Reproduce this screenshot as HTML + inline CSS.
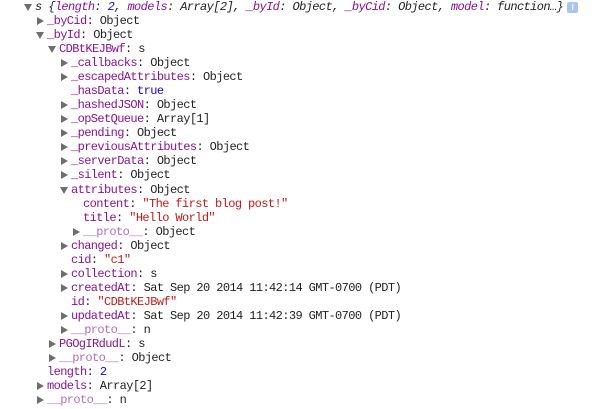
<!DOCTYPE html>
<html><head><meta charset="utf-8"><style>
body{margin:0;width:600px;height:409px;background:#fff;overflow:hidden;font-family:"Liberation Mono","DejaVu Sans Mono",monospace;font-size:12px;letter-spacing:-0.6px;color:#222;}
.r{position:absolute;height:14px;line-height:14px;white-space:pre;}
.k{color:#881391}.p{color:#b26fb8}.s{color:#c41a16}.n{color:#1c00cf}
.i{font-style:italic}
svg{position:absolute}
</style></head><body>
<div id="rows"></div>
<svg style="left:23px;top:2px" width="10" height="10"><path d="M1 2 L9 2 L5 9 Z" fill="#6e6e6e"/></svg>
<div class="r i" style="top:0;left:35px">s {<span class="k">length</span>: <span class="n">2</span>, <span class="k">models</span>: Array[2], <span class="k">_byId</span>: Object, <span class="k">_byCid</span>: Object, <span class="k">model</span>: function…}</div>
<div style="position:absolute;left:567px;top:2px;width:11px;height:11px;background:#a8c6f5;border-radius:2px;color:#fff;font:bold 9px 'Liberation Sans',sans-serif;text-align:center;line-height:11px;">i</div>
<script>
var rows=[
[1,'c','<span class="k">_byCid</span>: Object'],
[1,'o','<span class="k">_byId</span>: Object'],
[2,'o','<span class="k">CDBtKEJBwf</span>: s'],
[3,'c','<span class="k">_callbacks</span>: Object'],
[3,'c','<span class="k">_escapedAttributes</span>: Object'],
[3,'','<span class="k">_hasData</span>: <span class="n">true</span>'],
[3,'c','<span class="k">_hashedJSON</span>: Object'],
[3,'c','<span class="k">_opSetQueue</span>: Array[1]'],
[3,'c','<span class="k">_pending</span>: Object'],
[3,'c','<span class="k">_previousAttributes</span>: Object'],
[3,'c','<span class="k">_serverData</span>: Object'],
[3,'c','<span class="k">_silent</span>: Object'],
[3,'o','<span class="k">attributes</span>: Object'],
[4,'','<span class="k">content</span>: <span class="s">"The first blog post!"</span>'],
[4,'','<span class="k">title</span>: <span class="s">"Hello World"</span>'],
[4,'c','<span class="p">__proto__</span>: Object'],
[3,'c','<span class="k">changed</span>: Object'],
[3,'','<span class="k">cid</span>: <span class="s">"c1"</span>'],
[3,'c','<span class="k">collection</span>: s'],
[3,'c','<span class="k">createdAt</span>: Sat Sep 20 2014 11:42:14 GMT-0700 (PDT)'],
[3,'','<span class="k">id</span>: <span class="s">"CDBtKEJBwf"</span>'],
[3,'c','<span class="k">updatedAt</span>: Sat Sep 20 2014 11:42:39 GMT-0700 (PDT)'],
[3,'c','<span class="p">__proto__</span>: n'],
[2,'c','<span class="k">PGOgIRdudL</span>: s'],
[2,'c','<span class="p">__proto__</span>: Object'],
[1,'','<span class="k">length</span>: <span class="n">2</span>'],
[1,'c','<span class="k">models</span>: Array[2]'],
[1,'c','<span class="p">__proto__</span>: n']
];
var h='';
rows.forEach(function(r,i){
 var top=Math.round((i+1)*14.04), x=35+12*r[0];
 if(r[1]=='c') h+='<svg style="left:'+(x-12)+'px;top:'+(top+2)+'px" width="10" height="10"><path d="M2 1 L9 5 L2 9 Z" fill="#6e6e6e"/></svg>';
 if(r[1]=='o') h+='<svg style="left:'+(x-12)+'px;top:'+(top+2)+'px" width="10" height="10"><path d="M1 2 L9 2 L5 9 Z" fill="#6e6e6e"/></svg>';
 h+='<div class="r" style="top:'+top+'px;left:'+x+'px">'+r[2]+'</div>';
});
document.getElementById('rows').innerHTML=h;
</script>
</body></html>
